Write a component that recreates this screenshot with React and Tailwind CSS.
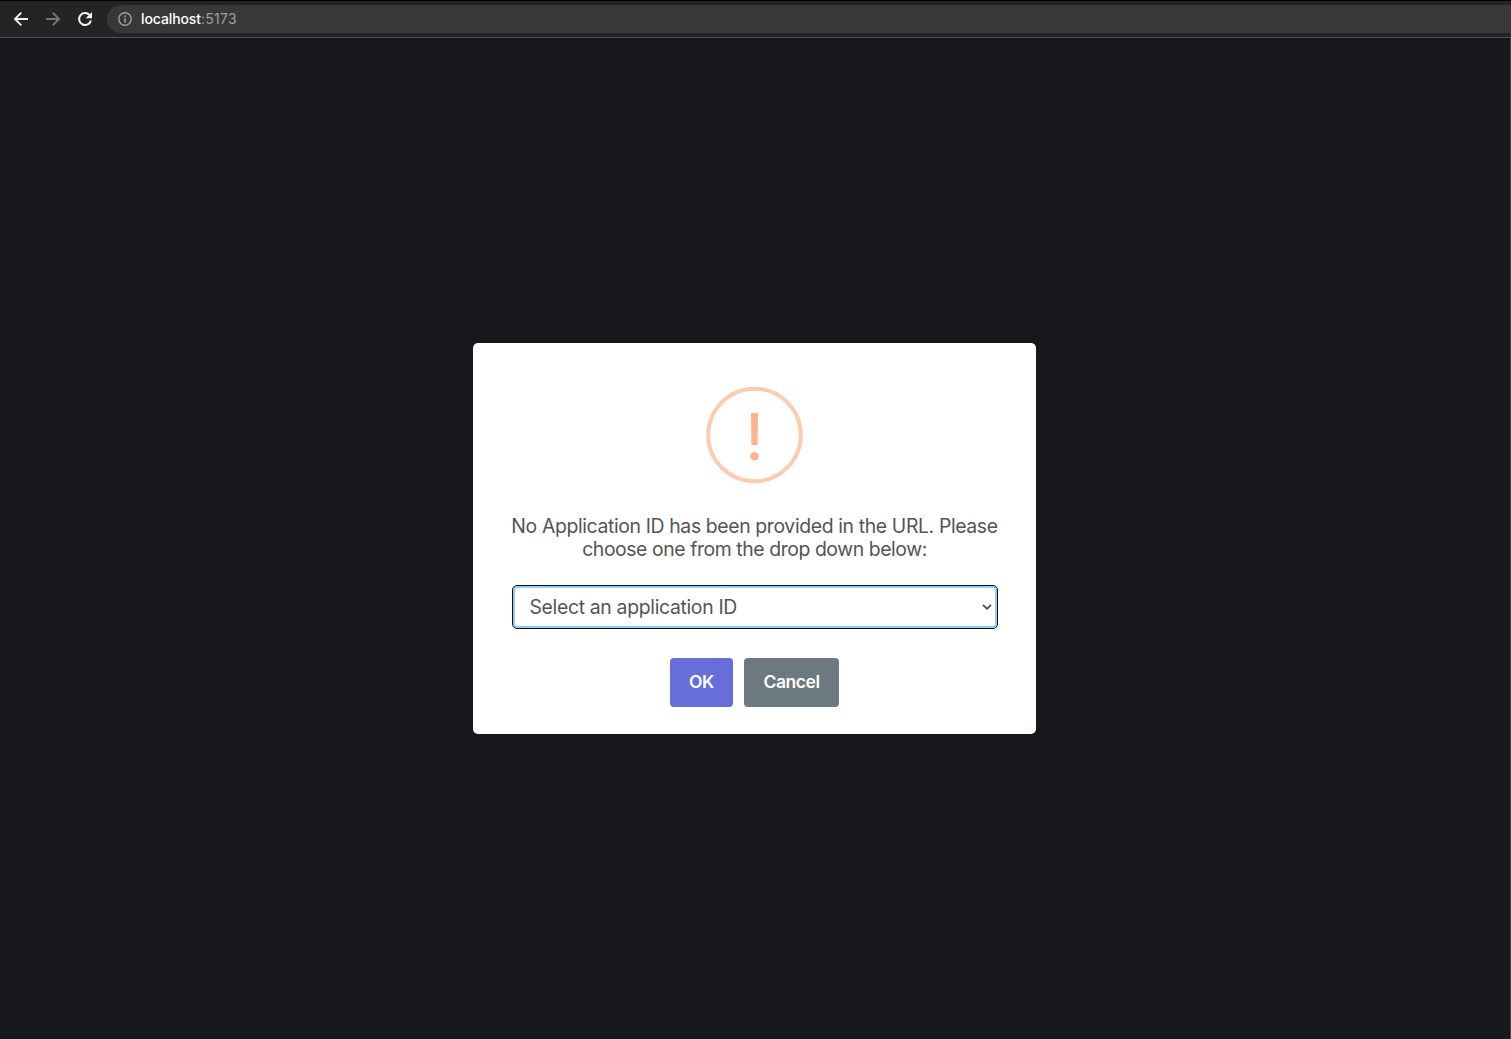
import React from "react";

function BrowserBar() {
  return (
    <header className="flex h-[38px] shrink-0 items-center border-t border-b border-t-black border-b-[#505355] bg-[#242424]">
      <nav className="flex shrink-0 items-center gap-4 pl-[13px]">
        <button aria-label="Back" className="text-[#f5f5f5]">
          <svg width="16" height="16" viewBox="0 0 16 16" fill="none" stroke="currentColor" strokeWidth="1.9">
            <path d="M15 8H2.3M8.3 1.7 2 8l6.3 6.3" />
          </svg>
        </button>
        <button aria-label="Forward" className="text-[#777777]">
          <svg width="16" height="16" viewBox="0 0 16 16" fill="none" stroke="currentColor" strokeWidth="1.9">
            <path d="M1 8h12.7M7.7 1.7 14 8l-6.3 6.3" />
          </svg>
        </button>
        <button aria-label="Reload" className="text-[#f5f5f5]">
          <svg width="16" height="16" viewBox="0 0 16 16" fill="none">
            <path d="M13.9 9.5A6 6 0 1 1 12.4 3.9" stroke="currentColor" strokeWidth="2" />
            <path d="M15 1v6.3H8.7z" fill="currentColor" />
          </svg>
        </button>
      </nav>
      <div className="ml-[14px] flex h-7 flex-1 items-center rounded-l-full bg-[#383838] pl-[11px]">
        <svg className="shrink-0 text-[#9aa0a6]" width="14" height="14" viewBox="0 0 14 14" fill="none">
          <circle cx="7" cy="7" r="6.2" stroke="currentColor" strokeWidth="1.4" />
          <path d="M7 6.2v4.2M7 3.5v1.5" stroke="currentColor" strokeWidth="1.7" />
        </svg>
        <span className="ml-[9px] text-[14px] leading-5 text-[#9aa0a6]">
          <span className="font-medium tracking-[-0.1px] text-white">localhost</span>
          <span className="tracking-[0.3px]">:5173</span>
        </span>
      </div>
    </header>
  );
}

function WarningIcon() {
  return (
    <svg className="mt-[43px] shrink-0" width="97" height="98" viewBox="0 0 97 98">
      <circle cx="48.5" cy="49" r="46.3" fill="none" stroke="#fdcbae" strokeWidth="3.9" />
      <path d="M45 27h7l-.4 32h-6.2z" fill="#fdb68b" />
      <circle cx="48.5" cy="70.3" r="4.3" fill="#fdb68b" />
    </svg>
  );
}

function Dialog() {
  return (
    <section
      role="dialog"
      className="mt-[305px] mr-[2px] flex h-[391px] w-[563px] flex-col items-center rounded-[5px] bg-white"
    >
      <WarningIcon />
      <p className="mt-[31px] ml-px text-center text-[19.4px] leading-[23px] text-[#545454]">
        <span className="block whitespace-nowrap tracking-[-0.37px]">No Application ID has been provided in the URL. Please</span>
        <span className="block whitespace-nowrap tracking-[-0.42px]">choose one from the drop down below:</span>
      </p>
      <button className="mt-[24px] ml-px flex h-[44px] w-[486px] shrink-0 items-center justify-between rounded-[5px] border border-[#101010] bg-white pr-[4px] pl-[17px] text-[19.4px] text-[#545454] inset-ring-2 inset-ring-[#94cbfb]">
        <span className="pt-px leading-[23px] whitespace-nowrap tracking-[-0.33px]">Select an application ID</span>
        <svg width="11" height="8" viewBox="0 0 11 8" fill="none" stroke="#4a4a4a" strokeWidth="1.8">
          <path d="M1 1.8 5 5.8 9 1.8" />
        </svg>
      </button>
      <div className="mt-[29px] flex gap-[11px] text-[17.5px] font-semibold text-white">
        <button className="h-[49px] w-[63px] rounded-[4px] bg-[#676ed9] pl-px tracking-[-0.3px]">OK</button>
        <button className="h-[49px] w-[95px] rounded-[4px] bg-[#6d7980] pl-px tracking-[-0.45px]">Cancel</button>
      </div>
    </section>
  );
}

export default function App() {
  return (
    <div className="flex h-screen flex-col overflow-hidden bg-[#15171a] font-['Inter',sans-serif]">
      <BrowserBar />
      <main className="flex flex-1 justify-center border-r border-[#47494b]">
        <Dialog />
      </main>
    </div>
  );
}
